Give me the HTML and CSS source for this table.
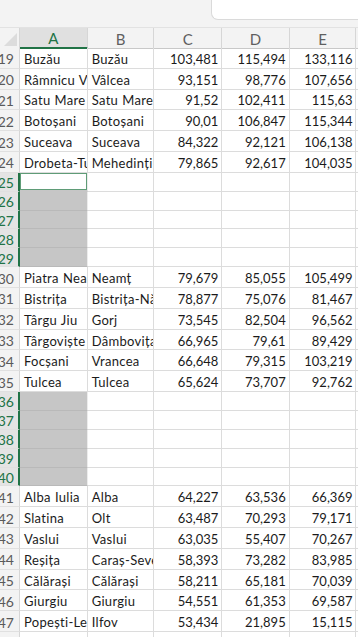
FILE: index.html
```html
<!DOCTYPE html>
<html lang="ro">
<head>
<meta charset="utf-8">
<title>Foaie de calcul</title>
<link rel="stylesheet" href="styles.css">
</head>
<body>
<div class="top"><div class="namebox"></div></div>
<div class="sheet">
  <div class="row head">
    <div class="corner"><span class="tri"></span></div>
    <div class="ch sel">A</div><div class="ch">B</div><div class="ch">C</div><div class="ch">D</div><div class="ch">E</div><div class="ch rest"></div>
  </div>

  <div class="row tall"><div class="rh">19</div><div class="c">Buzău</div><div class="c">Buzău</div><div class="c n">103,481</div><div class="c n">115,494</div><div class="c n">133,116</div><div class="c rest"></div></div>
  <div class="row tall"><div class="rh">20</div><div class="c">Râmnicu Vâlcea</div><div class="c">Vâlcea</div><div class="c n">93,151</div><div class="c n">98,776</div><div class="c n">107,656</div><div class="c rest"></div></div>
  <div class="row tall"><div class="rh">21</div><div class="c">Satu Mare</div><div class="c">Satu Mare</div><div class="c n">91,52</div><div class="c n">102,411</div><div class="c n">115,63</div><div class="c rest"></div></div>
  <div class="row tall"><div class="rh">22</div><div class="c">Botoșani</div><div class="c">Botoșani</div><div class="c n">90,01</div><div class="c n">106,847</div><div class="c n">115,344</div><div class="c rest"></div></div>
  <div class="row tall"><div class="rh">23</div><div class="c">Suceava</div><div class="c">Suceava</div><div class="c n">84,322</div><div class="c n">92,121</div><div class="c n">106,138</div><div class="c rest"></div></div>
  <div class="row tall"><div class="rh">24</div><div class="c">Drobeta-Turnu Severin</div><div class="c">Mehedinți</div><div class="c n">79,865</div><div class="c n">92,617</div><div class="c n">104,035</div><div class="c rest"></div></div>

  <div class="row short"><div class="rh sel">25</div><div class="c active"></div><div class="c"></div><div class="c"></div><div class="c"></div><div class="c"></div><div class="c rest"></div></div>
  <div class="row short"><div class="rh sel">26</div><div class="c grey"></div><div class="c"></div><div class="c"></div><div class="c"></div><div class="c"></div><div class="c rest"></div></div>
  <div class="row short"><div class="rh sel">27</div><div class="c grey"></div><div class="c"></div><div class="c"></div><div class="c"></div><div class="c"></div><div class="c rest"></div></div>
  <div class="row short"><div class="rh sel">28</div><div class="c grey"></div><div class="c"></div><div class="c"></div><div class="c"></div><div class="c"></div><div class="c rest"></div></div>
  <div class="row short"><div class="rh sel">29</div><div class="c grey"></div><div class="c"></div><div class="c"></div><div class="c"></div><div class="c"></div><div class="c rest"></div></div>

  <div class="row tall"><div class="rh">30</div><div class="c">Piatra Neamț</div><div class="c">Neamț</div><div class="c n">79,679</div><div class="c n">85,055</div><div class="c n">105,499</div><div class="c rest"></div></div>
  <div class="row tall"><div class="rh">31</div><div class="c">Bistrița</div><div class="c">Bistrița-Năsăud</div><div class="c n">78,877</div><div class="c n">75,076</div><div class="c n">81,467</div><div class="c rest"></div></div>
  <div class="row tall"><div class="rh">32</div><div class="c">Târgu Jiu</div><div class="c">Gorj</div><div class="c n">73,545</div><div class="c n">82,504</div><div class="c n">96,562</div><div class="c rest"></div></div>
  <div class="row tall"><div class="rh">33</div><div class="c">Târgoviște</div><div class="c">Dâmbovița</div><div class="c n">66,965</div><div class="c n">79,61</div><div class="c n">89,429</div><div class="c rest"></div></div>
  <div class="row tall"><div class="rh">34</div><div class="c">Focșani</div><div class="c">Vrancea</div><div class="c n">66,648</div><div class="c n">79,315</div><div class="c n">103,219</div><div class="c rest"></div></div>
  <div class="row tall"><div class="rh">35</div><div class="c">Tulcea</div><div class="c">Tulcea</div><div class="c n">65,624</div><div class="c n">73,707</div><div class="c n">92,762</div><div class="c rest"></div></div>

  <div class="row short"><div class="rh sel">36</div><div class="c grey"></div><div class="c"></div><div class="c"></div><div class="c"></div><div class="c"></div><div class="c rest"></div></div>
  <div class="row short"><div class="rh sel">37</div><div class="c grey"></div><div class="c"></div><div class="c"></div><div class="c"></div><div class="c"></div><div class="c rest"></div></div>
  <div class="row short"><div class="rh sel">38</div><div class="c grey"></div><div class="c"></div><div class="c"></div><div class="c"></div><div class="c"></div><div class="c rest"></div></div>
  <div class="row short"><div class="rh sel">39</div><div class="c grey"></div><div class="c"></div><div class="c"></div><div class="c"></div><div class="c"></div><div class="c rest"></div></div>
  <div class="row short"><div class="rh sel">40</div><div class="c grey"></div><div class="c"></div><div class="c"></div><div class="c"></div><div class="c"></div><div class="c rest"></div></div>

  <div class="row tall"><div class="rh">41</div><div class="c">Alba Iulia</div><div class="c">Alba</div><div class="c n">64,227</div><div class="c n">63,536</div><div class="c n">66,369</div><div class="c rest"></div></div>
  <div class="row tall"><div class="rh">42</div><div class="c">Slatina</div><div class="c">Olt</div><div class="c n">63,487</div><div class="c n">70,293</div><div class="c n">79,171</div><div class="c rest"></div></div>
  <div class="row tall"><div class="rh">43</div><div class="c">Vaslui</div><div class="c">Vaslui</div><div class="c n">63,035</div><div class="c n">55,407</div><div class="c n">70,267</div><div class="c rest"></div></div>
  <div class="row tall"><div class="rh">44</div><div class="c">Reșița</div><div class="c">Caraș-Severin</div><div class="c n">58,393</div><div class="c n">73,282</div><div class="c n">83,985</div><div class="c rest"></div></div>
  <div class="row tall"><div class="rh">45</div><div class="c">Călărași</div><div class="c">Călărași</div><div class="c n">58,211</div><div class="c n">65,181</div><div class="c n">70,039</div><div class="c rest"></div></div>
  <div class="row tall"><div class="rh">46</div><div class="c">Giurgiu</div><div class="c">Giurgiu</div><div class="c n">54,551</div><div class="c n">61,353</div><div class="c n">69,587</div><div class="c rest"></div></div>
  <div class="row tall"><div class="rh">47</div><div class="c">Popești-Leordeni</div><div class="c">Ilfov</div><div class="c n">53,434</div><div class="c n">21,895</div><div class="c n">15,115</div><div class="c rest"></div></div>
  <div class="row tall"><div class="rh">48</div><div class="c"></div><div class="c"></div><div class="c"></div><div class="c"></div><div class="c"></div><div class="c rest"></div></div>
</div>
</body>
</html>
```
FILE: styles.css
```css
html, body {
  margin: 0;
  padding: 0;
}
body {
  width: 358px;
  height: 637px;
  overflow: hidden;
  background: #ffffff;
  font-family: Lato, "Open Sans", sans-serif;
  color: #1b1b1b;
}
.top {
  height: 28px;
  background: #f3f3f3;
  display: flex;
  justify-content: flex-end;
  align-items: flex-start;
  box-sizing: border-box;
  border-bottom: 1px solid #e2e2e2;
}
.namebox {
  width: 147px;
  height: 20px;
  box-sizing: border-box;
  background: #ffffff;
  border-left: 1px solid #dadada;
  border-bottom: 1px solid #dadada;
  border-bottom-left-radius: 7px;
}
.sheet {
  display: flex;
  flex-direction: column;
}
.row {
  display: grid;
  grid-template-columns: 20px 67.7px 66.8px 67.8px 67.4px 66.8px 1fr;
}
.row.head { height: 20px; }
.row.tall { height: 20.8px; }
.row.short { height: 18.9px; }

.corner {
  box-sizing: border-box;
  background: #f3f3f3;
  border-right: 1px solid #d6d6d6;
  border-bottom: 1px solid #c8c8c8;
  display: flex;
  justify-content: flex-end;
  align-items: flex-end;
  padding: 0 2px 2px 0;
}
.tri {
  width: 0;
  height: 0;
  border-left: 13px solid transparent;
  border-bottom: 13px solid #dcdcdc;
}
.ch {
  box-sizing: border-box;
  background: #f3f3f3;
  border-right: 1px solid #d6d6d6;
  border-bottom: 1px solid #c8c8c8;
  display: flex;
  align-items: center;
  justify-content: center;
  font-size: 15px;
  color: #5f5f5f;
  padding-top: 1px;
}
.ch.sel {
  background: #e0e0e0;
  color: #217346;
  border-bottom: 2px solid #217346;
}
.ch.rest { border-right: none; }

.rh {
  box-sizing: border-box;
  background: #f3f3f3;
  border-right: 1px solid #d6d6d6;
  border-bottom: 1px solid #e0e0e0;
  display: flex;
  align-items: center;
  justify-content: flex-end;
  padding: 2px 5px 0 0;
  font-size: 14px;
  color: #5a5a5a;
  overflow: hidden;
}
.rh.sel {
  background: #e4e4e4;
  color: #217346;
  border-right: 2px solid #217346;
  padding-right: 4px;
}

.c {
  box-sizing: border-box;
  border-right: 1px solid #dcdcdc;
  border-bottom: 1px solid #dcdcdc;
  display: flex;
  align-items: center;
  padding: 2px 3px 0 4px;
  font-size: 13px;
  letter-spacing: 0.3px;
  word-spacing: 0.5px;
  white-space: nowrap;
  overflow: hidden;
}
.c.n {
  justify-content: flex-end;
  padding-right: 3px;
  letter-spacing: 0;
  word-spacing: 0;
}
.c.rest { border-right: none; }
.c.grey {
  background: #c6c6c6;
  border-bottom-color: #b9b9b9;
  border-right-color: #ececec;
}
.c.active {
  background: #ffffff;
  box-shadow: inset 0 0 0 1px #5f9c77;
  border-bottom: 2px solid #c6c6c6;
  border-right-color: #ececec;
}
```
